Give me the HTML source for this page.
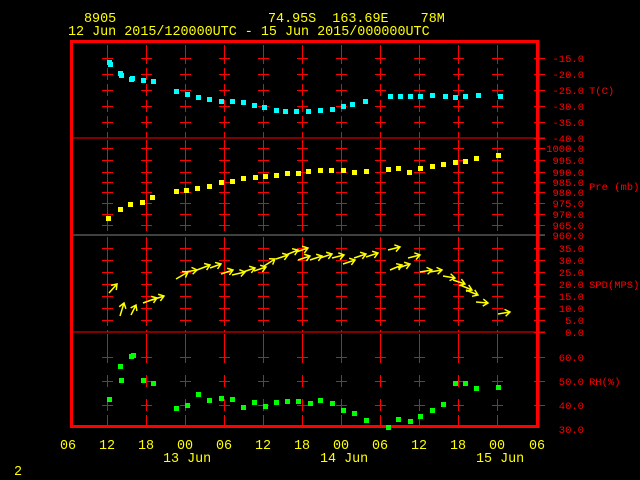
<!DOCTYPE html>
<html><head><style>
html,body{margin:0;padding:0;background:#000;width:640px;height:480px;overflow:hidden}
svg{display:block}
</style></head><body>
<svg width="640" height="480" xmlns="http://www.w3.org/2000/svg" font-family="Liberation Mono, monospace">
<rect width="640" height="480" fill="#000"/>
<g fill="#ffff00" font-size="13.4">
<text x="84" y="22">8905</text>
<text x="268" y="22" xml:space="preserve">74.95S  163.69E    78M</text>
<text x="68" y="35">12 Jun 2015/120000UTC - 15 Jun 2015/000000UTC</text>
<text x="163" y="462">13 Jun</text>
<text x="320" y="462">14 Jun</text>
<text x="476" y="462">15 Jun</text>
<text x="14" y="475">2</text>
</g>
<g fill="#ffff00" font-size="13.4">
<text x="60" y="449">06</text><text x="99" y="449">12</text><text x="138" y="449">18</text><text x="177" y="449">00</text><text x="216" y="449">06</text><text x="255" y="449">12</text><text x="294" y="449">18</text><text x="333" y="449">00</text><text x="372" y="449">06</text><text x="411" y="449">12</text><text x="450" y="449">18</text><text x="489" y="449">00</text><text x="529" y="449">06</text>
</g>
<g id="grid" stroke="#ff0000" stroke-width="1" shape-rendering="crispEdges">
<line x1="71" y1="138" x2="545" y2="138"/>
<line x1="71" y1="235" x2="545" y2="235" stroke="#808080"/>
<line x1="71" y1="332" x2="545" y2="332"/>
</g>
<g id="v" stroke="#ff0000" stroke-width="1" shape-rendering="crispEdges"></g>
<rect x="71.5" y="41.5" width="466" height="385" fill="none" stroke="#ff0000" stroke-width="3"/>
<line x1="538" y1="40" x2="538" y2="428" stroke="#ff0000" stroke-width="3"/>
<g id="rl" fill="#ff0000" font-size="10.5"></g>
<g fill="#ff0000" font-size="10.5">
<text x="589" y="94">T(C)</text>
<text x="589" y="190">Pre (mb)</text>
<text x="589" y="288">SPD(MPS)</text>
<text x="589" y="385">RH(%)</text>
</g>
<g id="pts"></g>
<g id="wind" stroke="#ffff00" stroke-width="1.5" fill="none"></g>
</svg>
<script>
var NS="http://www.w3.org/2000/svg";
function el(p,t,a,txt){var e=document.createElementNS(NS,t);for(var k in a)e.setAttribute(k,a[k]);if(txt)e.textContent=txt;document.getElementById(p).appendChild(e);return e;}
var xs=[107,146,185,224,263,302,341,380,419,458,497];
var ticks=[[58,74,90,106,122],[148,160,172,182,192,203,214,225],[248,260,272,284,296,308,320],[357,381,405]];
var panels=[[45,138],[140,235],[237,332],[334,426]];
xs.forEach(function(x,i){
 panels.forEach(function(p,j){
  el("v","line",{x1:x+.5,y1:p[0],x2:x+.5,y2:ticks[j][0]+6});
  ticks[j].forEach(function(y,k){
   el("v","line",{x1:x-5,y1:y+.5,x2:x+6,y2:y+.5});
   el("v","line",{x1:x+.5,y1:y-6,x2:x+.5,y2:Math.min(y+6,p[1])});
   if(k==ticks[j].length-1)el("v","line",{x1:x+.5,y1:y+10,x2:x+.5,y2:p[1]});
  });
 });
});
[[58,"-15.0"],[74,"-20.0"],[90,"-25.0"],[106,"-30.0"],[122,"-35.0"],[138,"-40.0"],[148,"1000.0"],[160,"995.0"],[172,"990.0"],[182,"985.0"],[192,"980.0"],[203,"975.0"],[214,"970.0"],[225,"965.0"],[235,"960.0"],[248,"35.0"],[260,"30.0"],[272,"25.0"],[284,"20.0"],[296,"15.0"],[308,"10.0"],[320,"5.0"],[332,"0.0"],[357,"60.0"],[381,"50.0"],[405,"40.0"],[429,"30.0"]].forEach(function(t){
 if(t[0]<428)el("v","line",{x1:534,y1:t[0]+.5,x2:545,y2:t[0]+.5});
 el("rl","text",{x:584,y:t[0]+4,"text-anchor":"end"},t[1]);
});
function pts(arr,c){arr.forEach(function(p){el("pts","rect",{x:p[0]-2,y:p[1]-2,width:5,height:5,fill:c});});}
pts([[109,62],[110,64],[120,73],[121,75],[131,79],[132,78],[143,80],[153,81],[176,91],[187,94],[198,97],[209,99],[221,101],[232,101],[243,102],[254,105],[264,107],[276,110],[285,111],[296,111],[308,111],[320,110],[332,109],[343,106],[352,104],[365,101],[390,96],[400,96],[410,96],[420,96],[432,95],[445,96],[455,97],[465,96],[478,95],[500,96]],"#00ffff");
pts([[108,218],[120,209],[130,204],[142,202],[152,197],[176,191],[186,190],[197,188],[209,186],[221,182],[232,181],[243,178],[255,177],[265,176],[276,175],[287,173],[298,173],[308,171],[320,170],[331,170],[343,170],[354,172],[366,171],[388,169],[398,168],[409,172],[420,168],[432,166],[443,164],[455,162],[465,161],[476,158],[498,155]],"#ffff00");
pts([[109,399],[120,366],[121,380],[131,356],[133,355],[143,380],[153,383],[176,408],[187,405],[198,394],[209,400],[221,398],[232,399],[243,407],[254,402],[265,406],[276,402],[287,401],[298,401],[310,403],[320,400],[332,403],[343,410],[354,413],[366,420],[388,427],[398,419],[410,421],[420,416],[432,410],[443,404],[455,383],[465,383],[476,388],[498,387]],"#00ff00");
var w=[[109,293,117,284],[120,316,124,303],[131,315,136,305],[143,303,157,298],[152,300,164,296],[176,279,188,272],[185,272,197,270],[197,270,210,265],[210,268,221,264],[221,274,233,270],[232,275,245,272],[243,272,255,268],[254,271,266,267],[264,266,275,259],[276,259,288,255],[286,255,298,250],[296,252,308,248],[298,260,310,256],[310,260,322,256],[320,258,332,254],[332,258,344,255],[343,264,355,260],[354,258,366,254],[366,257,378,253],[388,250,400,247],[390,270,402,265],[398,268,410,264],[408,258,420,255],[420,272,432,270],[430,272,442,270],[443,276,455,278],[453,280,465,284],[460,285,472,290],[466,290,478,295],[476,302,488,303],[498,314,510,312]];
w.forEach(function(a){
 var dx=a[2]-a[0],dy=a[3]-a[1],L=Math.sqrt(dx*dx+dy*dy),ux=dx/L,uy=dy/L;
 var h=5;
 var p1=[a[2]-h*ux-h*0.7*uy,a[3]-h*uy+h*0.7*ux],p2=[a[2]-h*ux+h*0.7*uy,a[3]-h*uy-h*0.7*ux];
 el("wind","path",{d:"M"+a[0]+" "+a[1]+"L"+a[2]+" "+a[3]+"M"+p1.join(" ")+"L"+a[2]+" "+a[3]+"L"+p2.join(" ")});
});
</script>
</body></html>
